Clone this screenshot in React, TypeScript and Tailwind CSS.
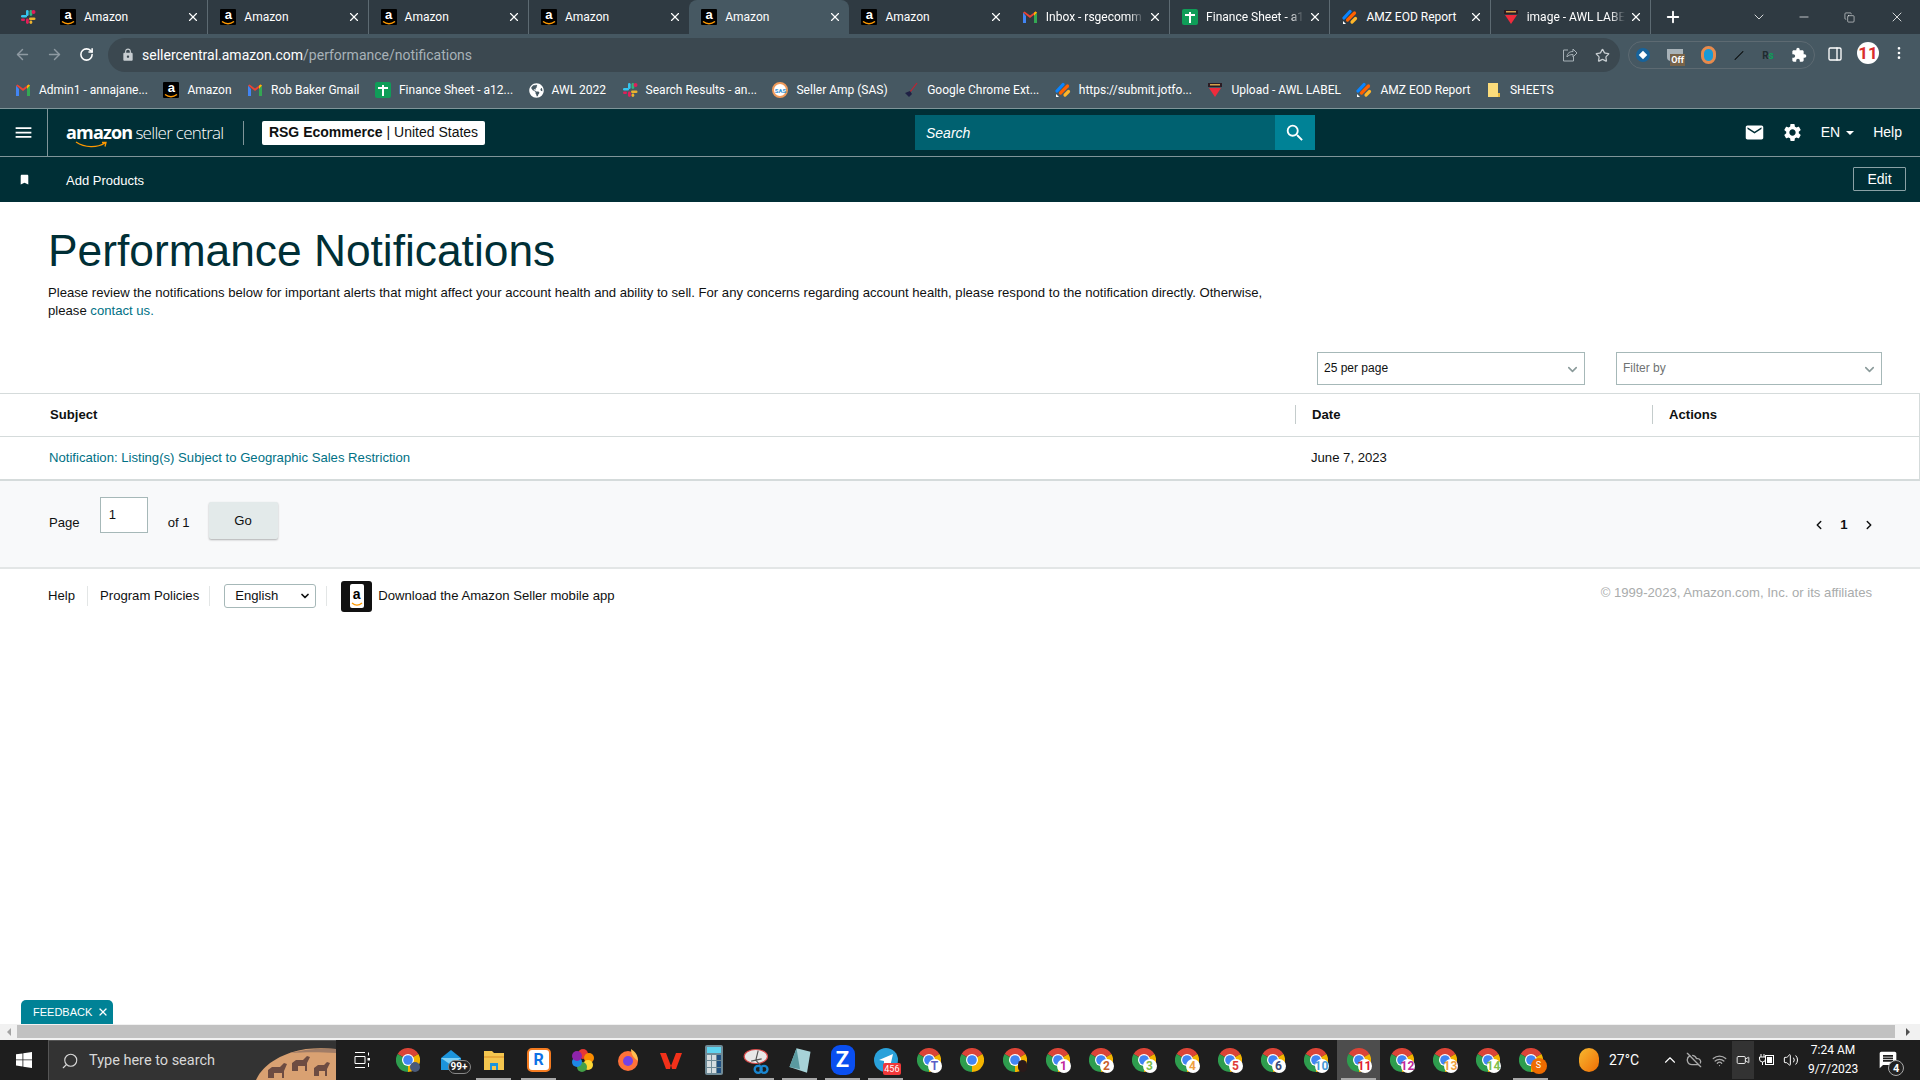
import React from "react";
import {
  ArrowLeft,
  ArrowRight,
  ChevronDown,
  ChevronLeft,
  ChevronRight,
  ChevronUp,
  Copy,
  EllipsisVertical,
  Minus,
  PanelRight,
  Plus,
  RotateCw,
  Search,
  Star,
  Video,
  Volume2,
  Wifi,
  X,
  CloudOff,
} from "lucide-react";
import { FaGlobeAmericas } from "react-icons/fa";
import {
  MdBookmark,
  MdExtension,
  MdLock,
  MdMail,
  MdMenu,
  MdMessage,
  MdSearch,
  MdSettings,
} from "react-icons/md";

const AmazonIcon = () => (
  <span className="relative flex h-4 w-4 shrink-0 justify-center rounded-[1px] bg-black font-['Liberation_Sans',sans-serif] text-[13px] leading-[12px] font-bold text-white">
    a
    <svg viewBox="0 0 16 4" className="absolute bottom-0 left-0 h-1 w-4">
      <path d="M2 0.5C6 3.5 10 3.5 14 0.5" fill="none" stroke="#f90" strokeWidth="1.4" />
    </svg>
  </span>
);

const GmailIcon = () => (
  <svg viewBox="0 0 16 16" className="h-4 w-4 shrink-0">
    <path d="M1 3.5V14h3V7z" fill="#4285f4" />
    <path d="M12 7v7h3V3.5z" fill="#34a853" />
    <path d="M1 3.5L8 9l7-5.5-1.5-1L8 6.5 2.500 2.500z" fill="#ea4335" />
    <path d="M12 7l3-3.500L13.500 2.500 12 3.700z" fill="#fbbc04" />
  </svg>
);

const SheetsIcon = () => (
  <span className="relative h-4 w-4 shrink-0 rounded-[2px] bg-[#0f9d58]">
    <span className="absolute top-[3px] left-[7px] h-[11px] w-[2px] bg-white" />
    <span className="absolute top-[5px] left-[3px] h-[2px] w-[10px] bg-white" />
  </span>
);

const SlackIcon = () => (
  <svg viewBox="0 0 16 16" className="h-4 w-4 shrink-0">
    <rect x="1" y="6" width="6" height="2.600" rx="1.300" fill="#36c5f0" />
    <rect x="6" y="1" width="2.600" height="6" rx="1.300" fill="#36c5f0" />
    <rect x="9.500" y="1" width="2.800" height="6" rx="1.400" fill="#2eb67d" />
    <circle cx="13.500" cy="3" r="2" fill="#e01e5a" />
    <rect x="9" y="8.500" width="6.500" height="2.600" rx="1.300" fill="#ecb22e" />
    <rect x="6" y="9.500" width="2.800" height="5.500" rx="1.400" fill="#e01e5a" />
    <rect x="1" y="9.500" width="4" height="2.600" rx="1.300" fill="#e01e5a" />
    <rect x="9.500" y="11.500" width="2.800" height="3.500" rx="1.400" fill="#ecb22e" />
  </svg>
);

const JotformIcon = () => (
  <svg viewBox="0 0 16 16" className="h-4 w-4 shrink-0">
    <path d="M2 9L8 2.500" stroke="#0a84ff" strokeWidth="3.200" strokeLinecap="round" />
    <path d="M5.500 11L12.500 4" stroke="#ff6100" strokeWidth="3.200" strokeLinecap="round" />
    <path d="M10 13L13.500 9.500" stroke="#ffb629" strokeWidth="3.200" strokeLinecap="round" />
    <path d="M1 12v3h3z" fill="#fff" />
  </svg>
);

const AwlIcon = () => (
  <svg viewBox="0 0 16 16" className="h-4 w-4 shrink-0">
    <rect x="1" y="1" width="14" height="4" fill="#2b1c24" />
    <rect x="3" y="2" width="10" height="1.500" fill="#d6a04a" />
    <path d="M2 6h12l-6 9z" fill="#ef2b3c" />
  </svg>
);

const SasIcon = () => (
  <span className="flex h-4 w-4 shrink-0 items-center justify-center rounded-full border-2 border-[#ef9a5a] bg-white text-[6px] font-bold text-[#2d8fd5]">
    SAS
  </span>
);

const BroomIcon = () => (
  <svg viewBox="0 0 16 16" className="h-4 w-4 shrink-0">
    <path d="M14 1L7 10" stroke="#c8202f" strokeWidth="1.200" />
    <path d="M2 11l5-2 2 3-3 3z" fill="#1f2145" />
  </svg>
);

const FolderIcon = () => (
  <svg viewBox="0 0 16 16" className="h-4 w-4 shrink-0">
    <path d="M2 1h10v14H2z" fill="#fbdc7b" />
    <path d="M12 11h2v4h-2z" fill="#e8b83f" />
  </svg>
);

const ChromeIcon = ({ badge, badgeColor, dot }: { badge?: string; badgeColor?: string; dot?: boolean }) => (
  <span className="relative block h-6 w-6">
    <svg viewBox="0 0 24 24" className="h-6 w-6">
      <path d="M12 12L1.600 6A12 12 0 0 1 22.400 6Z" fill="#db4437" />
      <path d="M12 12L22.400 6A12 12 0 0 1 12 24Z" fill="#f4b400" />
      <path d="M12 12L12 24A12 12 0 0 1 1.600 6Z" fill="#2e9d4e" />
      <circle cx="12" cy="12" r="6" fill="#fff" />
      <circle cx="12" cy="12" r="4.800" fill="#4285f4" />
    </svg>
    {badge && (
      <span
        className="absolute -right-[1px] -bottom-[1px] flex h-[14px] w-[14px] items-center justify-center rounded-full bg-white text-[12px] leading-none font-bold"
        style={{ color: badgeColor }}
      >
        {badge}
      </span>
    )}
    {dot && <span className="absolute right-0 bottom-0 h-[12px] w-[9px] rounded-full bg-[#2a1a1a]" />}
  </span>
);

const tabs = [
  { title: "Amazon", icon: <AmazonIcon /> },
  { title: "Amazon", icon: <AmazonIcon /> },
  { title: "Amazon", icon: <AmazonIcon /> },
  { title: "Amazon", icon: <AmazonIcon /> },
  { title: "Amazon", icon: <AmazonIcon />, active: true },
  { title: "Amazon", icon: <AmazonIcon /> },
  { title: "Inbox - rsgecomm", icon: <GmailIcon />, fade: true },
  { title: "Finance Sheet - a1", icon: <SheetsIcon />, fade: true },
  { title: "AMZ EOD Report", icon: <JotformIcon /> },
  { title: "image - AWL LABE", icon: <AwlIcon />, fade: true },
];

const bookmarks = [
  { title: "Admin1 - annajane...", icon: <GmailIcon /> },
  { title: "Amazon", icon: <AmazonIcon /> },
  { title: "Rob Baker Gmail", icon: <GmailIcon /> },
  { title: "Finance Sheet - a12...", icon: <SheetsIcon /> },
  { title: "AWL 2022", icon: <FaGlobeAmericas size={15} className="shrink-0 text-white" /> },
  { title: "Search Results - an...", icon: <SlackIcon /> },
  { title: "Seller Amp (SAS)", icon: <SasIcon /> },
  { title: "Google Chrome Ext...", icon: <BroomIcon /> },
  { title: "https://submit.jotfo...", icon: <JotformIcon /> },
  { title: "Upload - AWL LABEL", icon: <AwlIcon /> },
  { title: "AMZ EOD Report", icon: <JotformIcon /> },
  { title: "SHEETS", icon: <FolderIcon /> },
];

const BrowserChrome = () => (
  <div className="shrink-0 font-['Roboto',sans-serif] text-white">
    <div className="flex h-[34px] bg-[#2f3a42]">
      <div className="flex w-[48px] items-center justify-center pl-[8px]">
        <SlackIcon />
      </div>
      {tabs.map((tab, i) => (
        <div
          key={i}
          className={`flex h-[34px] w-[160.3px] items-center pr-[7px] pl-[12px] text-[12px] ${
            tab.active
              ? "rounded-t-lg bg-[#465862]"
              : tabs[i + 1]?.active || tabs[i - 1]?.active
                ? ""
                : "border-r border-[#5d6a72]"
          }`}
        >
          {tab.icon}
          <span className={`ml-2 flex-1 whitespace-nowrap ${tab.fade ? "[mask-image:linear-gradient(to_right,black_85%,transparent)]" : ""}`}>
            {tab.title}
          </span>
          <X size={14} className="ml-1 shrink-0" />
        </div>
      ))}
      <div className="flex w-[45px] items-center justify-center">
        <Plus size={18} strokeWidth={2.500} />
      </div>
      <div className="ml-auto flex items-center text-white">
        <ChevronDown size={16} strokeWidth={1.200} className="mr-[30px]" />
        <Minus size={14} strokeWidth={1.200} className="mr-[33px]" />
        <Copy size={11} strokeWidth={1.200} className="mr-[34px]" />
        <X size={16} strokeWidth={1.200} className="mr-[15px]" />
      </div>
    </div>
    <div className="flex h-[38px] items-start bg-[#465862] pt-[4px]">
      <div className="flex w-[108px] items-center justify-around px-[6px] pt-[8px]">
        <ArrowLeft size={17} className="text-[#8e9aa2]" />
        <ArrowRight size={17} className="text-[#8e9aa2]" />
        <RotateCw size={15} strokeWidth={2.500} className="text-white" />
      </div>
      <div className="flex h-[34px] w-[1512px] items-center rounded-full bg-[#3b4850] pr-[10px] pl-[13px] text-[14px]">
        <MdLock size={14} className="text-[#c7cdd1]" />
        <span className="ml-[7px]">sellercentral.amazon.com</span>
        <span className="text-[#a8b2b8]">/performance/notifications</span>
        <svg viewBox="0 0 16 16" className="ml-auto h-4 w-4 fill-none stroke-[#a8b2b8]">
          <path d="M6 3H1.500v11h10v-4" />
          <path d="M5 10c0-4 3-5.500 6-5.500V2l4 4-4 4V7.500c-3 0-5 1-6 2.500z" />
        </svg>
        <Star size={15} className="ml-[17px] text-[#c7cdd1]" />
      </div>
      <div className="mt-[3px] ml-[8px] flex h-[28px] w-[187px] items-center justify-between rounded-full border border-[#5d6a72] px-[7px]">
        <span className="flex h-[14px] w-[14px] items-center justify-center rounded-full bg-[#17639b]">
          <span className="h-[6px] w-[6px] rotate-45 bg-white" />
        </span>
        <span className="relative h-3 w-4 rounded-b bg-[#a8b2b8]">
          <span className="absolute top-[5px] left-[3px] bg-[#77634a] px-[1px] text-[9px] leading-[12px] font-bold">Off</span>
        </span>
        <span className="h-[18px] w-[15px] rounded-full border-[3px] border-[#e88a4c] bg-[#1a9ad6]" />
        <span className="h-[1px] w-3 -rotate-45 bg-black" />
        <span className="text-[10px] font-bold text-[#1f2b30]">R<span className="text-[#0f9d58]">s</span></span>
        <MdExtension size={16} className="text-white" />
      </div>
      <PanelRight size={16} className="mt-[8px] ml-[12px] text-white" />
      <span className="mt-[4px] ml-[14px] flex h-[22px] w-[22px] items-center justify-center rounded-full bg-white text-[17px] leading-none font-bold text-[#d92d2d]">11</span>
      <EllipsisVertical size={16} className="mt-[7px] ml-[12px]" />
    </div>
    <div className="flex h-[36px] items-center gap-[15.500px] bg-[#465862] pl-[15px] text-[12px]">
      {bookmarks.map((b, i) => (
        <div key={i} className="flex items-center gap-2 whitespace-nowrap">
          {b.icon}
          <span>{b.title}</span>
        </div>
      ))}
    </div>
  </div>
);

const SellerHeader = () => (
  <div className="shrink-0 bg-[#002f36] font-['Liberation_Sans',sans-serif] text-white">
    <div className="flex h-[49px] items-center border-y border-[#7f9599]">
      <div className="flex h-full w-[48px] items-center justify-center border-r border-[#7f9599]">
        <MdMenu size={21} />
      </div>
      <div className="relative ml-[18px] flex w-[159px] items-baseline font-['Open_Sans',sans-serif] whitespace-nowrap">
        <span className="text-[18px] tracking-[-0.8px] font-bold">amazon</span>
        <span className="ml-[3px] text-[17px] tracking-[-0.7px] font-light">seller central</span>
        <svg viewBox="0 0 34 8" className="absolute top-[22px] left-[9px] h-2 w-[34px]">
          <path d="M1 1C10 7 22 7 30 2M27 1.500l4 0-1 4" fill="none" stroke="#f90" strokeWidth="1.300" />
        </svg>
      </div>
      <div className="ml-[18px] h-6 w-px bg-[#7f9599]" />
      <div className="ml-[18px] flex h-[24px] w-[223px] items-center justify-center rounded-[2px] bg-white text-[14px] whitespace-nowrap text-[#0f1111]">
        <b>RSG Ecommerce</b>
        <span className="ml-1">| United States</span>
      </div>
      <div className="ml-[430px] flex h-[35px] w-[400px]">
        <div className="flex flex-1 items-center bg-[#006170] pt-px pl-[11px] text-[14px] italic">Search</div>
        <div className="flex w-[40px] items-center justify-center bg-[#008296]">
          <MdSearch size={22} />
        </div>
      </div>
      <div className="ml-auto flex items-center pr-[18px] text-[14px]">
        <MdMail size={21} />
        <MdSettings size={21} className="ml-[17px]" />
        <span className="ml-[18px]">EN</span>
        <span className="mt-[1px] ml-[6px] border-x-[4px] border-t-[4px] border-x-transparent border-t-white" />
        <span className="ml-[19px]">Help</span>
      </div>
    </div>
    <div className="flex h-[45px] items-center pr-[14px] pl-[18px] text-[13px] font-medium">
      <MdBookmark size={13} />
      <span className="mt-[3px] ml-[35px]">Add Products</span>
      <button className="mb-[1px] ml-auto h-[24px] w-[53px] rounded-[1px] border border-[#8aa1a5] text-[14px] font-normal">Edit</button>
    </div>
  </div>
);

const SelectBox = ({ label, muted, width }: { label: string; muted?: boolean; width: string }) => (
  <div className={`flex h-[33px] items-start justify-between border border-[#a6b8b8] pt-[6px] pr-[4px] pl-[6px] text-[12px] ${width} ${muted ? "text-[#6f7373]" : "text-[#0f1111]"}`}>
    <span>{label}</span>
    <ChevronDown size={15} strokeWidth={2.500} className="mt-[3px] text-[#8a9a9a]" />
  </div>
);

const NotificationsPage = () => (
  <div className="relative min-h-0 flex-1 bg-white font-['Liberation_Sans',sans-serif] text-[13.13px] text-[#0f1111]">
    <div className="pt-[23px] pl-[48px]">
      <h1 className="text-[44.3px] leading-[52px] font-normal text-[#002f36]">Performance Notifications</h1>
      <p className="mt-[7px] w-[1240px] leading-[18px]">
        Please review the notifications below for important alerts that might affect your account health and ability to sell. For any concerns regarding account health, please respond to the notification directly. Otherwise, please <span className="text-[#007185]">contact us.</span>
      </p>
    </div>
    <div className="mt-[32px] flex justify-end gap-[31px] pr-[38px]">
      <SelectBox label="25 per page" width="w-[268px]" />
      <SelectBox label="Filter by" muted width="w-[266px]" />
    </div>
    <div className="mt-[8px] border-y border-r border-[#d5dbdb] border-b-2">
      <div className="flex h-[43px] items-center border-b border-[#d5dbdb] pb-[2px] font-bold">
        <div className="h-[19px] w-[1295px] pl-[50px] leading-[19px]">Subject</div>
        <div className="h-[19px] w-[357px] border-l border-[#c4cccc] pl-[16px] leading-[19px]">Date</div>
        <div className="h-[19px] border-l border-[#c4cccc] pl-[16px] leading-[19px]">Actions</div>
      </div>
      <div className="flex h-[42px] items-center">
        <div className="w-[1295px] pl-[49px] text-[#007185]">Notification: Listing(s) Subject to Geographic Sales Restriction</div>
        <div className="pl-[16px]">June 7, 2023</div>
      </div>
    </div>
    <div className="flex h-[88px] items-start border-b-2 border-[#e3e6e6] bg-[#f8f9fa] pl-[49px]">
      <span className="mt-[32px]">Page</span>
      <div className="mt-[16px] ml-[20px] h-[36px] w-[48px] border border-[#a6b8b8] bg-white pt-[7px] pl-[8px]">1</div>
      <span className="mt-[32px] ml-[20px]">of 1</span>
      <button className="mt-[21px] ml-[19px] h-[37px] w-[69px] rounded-[2px] bg-[#e3eaea] shadow-[0_1px_2px_rgba(0,0,0,0.3)]">Go</button>
      <div className="mt-[34px] mr-[44px] ml-auto flex w-[64px] items-center justify-between">
        <ChevronLeft size={14} strokeWidth={2.500} />
        <span className="font-bold">1</span>
        <ChevronRight size={14} strokeWidth={2.500} />
      </div>
    </div>
    <div className="flex h-[54px] items-center pr-[48px] pl-[48px]">
      <span>Help</span>
      <span className="mx-[12px] h-[20px] w-px bg-[#e3e6e6]" />
      <span>Program Policies</span>
      <span className="ml-[10px] h-[20px] w-px bg-[#e3e6e6]" />
      <div className="ml-[14px] flex h-[24px] w-[92px] items-center justify-between rounded-[3px] border border-[#a6b8b8] pr-[4px] pl-[10px]">
        English
        <ChevronDown size={12} strokeWidth={3.500} />
      </div>
      <span className="ml-[10px] h-[20px] w-px bg-[#e3e6e6]" />
      <div className="relative ml-[14px] flex h-[31px] w-[31px] items-center justify-center rounded-[3px] bg-[#111]">
        <span className="relative flex h-[24px] w-[14px] justify-center rounded-[2px] bg-white pt-[3px] text-[14px] leading-[14px] font-bold text-black">
          a
          <svg viewBox="0 0 12 4" className="absolute bottom-[2px] left-[1px] h-1 w-3">
            <path d="M1 1C4 3.500 8 3.500 11 1" fill="none" stroke="#f90" strokeWidth="1.300" />
          </svg>
        </span>
      </div>
      <span className="ml-[6px]">Download the Amazon Seller mobile app</span>
      <span className="mb-[6px] ml-auto text-[#a9acac]">© 1999-2023, Amazon.com, Inc. or its affiliates</span>
    </div>
    <div className="absolute bottom-0 left-[21px] flex h-[24px] w-[92px] items-center rounded-t-[5px] bg-[#008296] pl-[12px] text-[11px] font-medium text-white">
      FEEDBACK
      <X size={12} strokeWidth={2.500} className="ml-[5px]" />
    </div>
  </div>
);

const Scrollbar = () => (
  <div className="flex h-[16px] shrink-0 items-start bg-[#f1f1f1] pt-px">
    <div className="flex h-[14px] w-[17px] items-center justify-center">
      <span className="border-y-[4px] border-r-[4px] border-y-transparent border-r-[#a3a3a3]" />
    </div>
    <div className="h-[13px] w-[1878px] bg-[#c1c1c1]" />
    <div className="flex h-[14px] flex-1 items-center justify-center">
      <span className="border-y-[4px] border-l-[4px] border-y-transparent border-l-[#505050]" />
    </div>
  </div>
);

const chromeBadges: { badge?: string; color?: string; active?: boolean; dot?: boolean }[] = [
  { badge: "T", color: "#5b5fc7" },
  {},
  { dot: true },
  { badge: "1", color: "#c0269a" },
  { badge: "2", color: "#c8602a" },
  { badge: "3", color: "#7fbf4a" },
  { badge: "4", color: "#f0a040" },
  { badge: "5", color: "#e03a3a" },
  { badge: "6", color: "#3a4a7a" },
  { badge: "10", color: "#4a9ad6" },
  { badge: "11", color: "#e01e2e", active: true },
  { badge: "12", color: "#c0269a" },
  { badge: "13", color: "#f0a040" },
  { badge: "14", color: "#7fbf4a" },
];

const TaskItem = ({
  children,
  running,
  active,
  className = "",
}: {
  children: React.ReactNode;
  running?: boolean;
  active?: boolean;
  className?: string;
}) => (
  <div className={`relative flex h-[40px] w-[43px] shrink-0 items-center justify-center ${active ? "bg-[#4d4d4d]" : ""} ${className}`}>
    {children}
    {running && <span className="absolute right-[4px] bottom-0 left-[4px] h-[2px] bg-[#a8a8a8]" />}
  </div>
);

const Taskbar = () => (
  <div className="flex h-[40px] shrink-0 items-center bg-[#1e1e1e] font-['Roboto',sans-serif] text-white">
    <div className="flex w-[48px] items-center justify-center">
      <svg viewBox="0 0 16 16" className="h-4 w-4 fill-white">
        <path d="M0 2.300L6.500 1.400V7.500H0zM7.300 1.300L16 0V7.500H7.300zM0 8.300H6.500V14.500L0 13.600zM7.300 8.300H16V16L7.300 14.700z" />
      </svg>
    </div>
    <div className="relative flex h-[40px] w-[288px] items-center overflow-hidden border-t border-l border-[#555] bg-[#333] pl-[12px] text-[14.500px] text-[#d8d8d8]">
      <Search size={18} strokeWidth={1.500} className="-scale-x-100" />
      <span className="ml-[10px]">Type here to search</span>
      <svg viewBox="0 0 80 36" className="absolute right-0 bottom-0 h-[36px] w-[80px]">
        <path d="M0 36C8 18 30 8 50 5c10-1 20-1 30 0v31z" fill="#d9a172" />
        <path d="M34 9c14-4 30-5 46-4v4C64 8 50 8 34 9z" fill="#a07c66" />
        <path d="M12 34v-8l4-3 8 0 4-4 3 1-3 7v7h-2v-5l-8 0v5zM36 27v-8l4-3 7 0 4-4 3 1-3 6v8h-2v-5l-7 0v5zM58 32v-8l4-3 6 0 3-3 3 1-3 6v7h-2v-5l-6 0v5z" fill="#6d4c42" />
      </svg>
    </div>
    <div className="flex w-[50px] items-center justify-center pl-[2px]">
      <svg viewBox="0 0 16 16" className="h-4 w-4 fill-none stroke-white">
        <path d="M1 .5h10M1 15.500h10M1 4.500h10v7H1z" />
        <rect x="13.500" y="6" width="2.500" height="2.500" fill="#fff" stroke="none" />
        <path d="M14.500 .5v3M14.500 11v4" />
      </svg>
    </div>
    <TaskItem>
      <span className="relative"><ChromeIcon /><span className="absolute right-0 bottom-0 h-[10px] w-[10px] rounded-full bg-[#4a5a7a]" /></span>
    </TaskItem>
    <TaskItem>
      <span className="relative block h-6 w-6">
        <svg viewBox="0 0 24 24" className="h-6 w-6"><path d="M2 10L12 2l10 8v12H2z" fill="#1b94dc" /><path d="M2 10l10 7 10-7" fill="#7fd0f5" /></svg>
        <span className="absolute -right-[8px] -bottom-[2px] rounded-full border border-[#888] bg-[#222] px-[2px] text-[10px] leading-[12px] font-bold">99+</span>
      </span>
    </TaskItem>
    <TaskItem running>
      <svg viewBox="0 0 24 24" className="h-6 w-6"><path d="M2 3h8l2 2h10v17H2z" fill="#f4c64f" /><path d="M2 8h20v2H2z" fill="#e7a93a" /><path d="M8 15h8v7h-2v-4h-4v4H8z" fill="#1b94dc" /></svg>
    </TaskItem>
    <TaskItem running className="ml-[2px]">
      <span className="flex h-6 w-6 items-center justify-center rounded-[5px] border-2 border-[#f47b20] bg-white text-[16px] leading-none font-bold text-[#0f72e5]">R</span>
    </TaskItem>
    <TaskItem className="ml-[1px]">
      <svg viewBox="0 0 24 24" className="h-6 w-6">
        <circle cx="12" cy="6" r="5" fill="#e53935" /><circle cx="18" cy="10" r="5" fill="#fb8c00" /><circle cx="17" cy="17" r="5" fill="#fdd835" />
        <circle cx="11" cy="19" r="5" fill="#43a047" /><circle cx="6" cy="14" r="5" fill="#1e88e5" /><circle cx="6" cy="8" r="5" fill="#8e24aa" />
      </svg>
    </TaskItem>
    <TaskItem className="ml-[2px]">
      <svg viewBox="0 0 24 24" className="h-6 w-6">
        <circle cx="12" cy="13" r="10" fill="#ff7139" /><path d="M15 1c5 3 7 7 7 12-4-3-7-6-7-12z" fill="#ffbd4f" /><circle cx="12" cy="13" r="5" fill="#7542e5" />
      </svg>
    </TaskItem>
    <TaskItem>
      <svg viewBox="0 0 24 24" className="h-6 w-6"><path d="M1 5h6l5 13 5-13h6l-6 16h-4l-1-4-1 4H7z" fill="#f2311a" /></svg>
    </TaskItem>
    <TaskItem>
      <span className="flex h-[30px] w-[18px] flex-col rounded-[2px] bg-[#6f8a96] p-[2px]">
        <span className="h-[6px] bg-[#5fd4f0]" />
        <span className="mt-[2px] grid flex-1 grid-cols-3 gap-[1px]">
          {Array.from({ length: 9 }).map((_, i) => (
            <span key={i} className={i % 3 === 2 ? "bg-[#1f4f80]" : "bg-[#d6dde0]"} />
          ))}
        </span>
      </span>
    </TaskItem>
    <TaskItem running>
      <svg viewBox="0 0 24 24" className="h-7 w-7"><ellipse cx="11" cy="9" rx="10" ry="6" fill="#e8e8e8" stroke="#d94a4a" /><path d="M13 4l-2 8 5 6M7 13l9-2" stroke="#555" fill="none" /><circle cx="18" cy="20" r="3" fill="none" stroke="#1a86d0" strokeWidth="2" /><circle cx="13" cy="20" r="3" fill="none" stroke="#1a86d0" strokeWidth="2" /></svg>
    </TaskItem>
    <TaskItem running>
      <svg viewBox="0 0 24 24" className="h-7 w-7"><path d="M9 2l12 3-3 18L3 18z" fill="#a7d3d8" /><path d="M9 2l3 18-9-2z" fill="#5a9aa0" /></svg>
    </TaskItem>
    <TaskItem running>
      <span className="flex h-[30px] w-[24px] items-center justify-center rounded-[9px] bg-[#0a4ff0] text-[22px] leading-none font-bold">Z</span>
    </TaskItem>
    <TaskItem running>
      <span className="relative block h-6 w-6 rounded-full bg-[#2aa1da]">
        <svg viewBox="0 0 24 24" className="h-6 w-6"><path d="M5 12l14-6-3 13-4-4-2 2v-4z" fill="#fff" /></svg>
        <span className="absolute -right-[3px] -bottom-[3px] rounded-[2px] bg-[#f0383a] px-px text-[9px] leading-[12px]">456</span>
      </span>
    </TaskItem>
    {chromeBadges.map((c, i) => (
      <TaskItem key={i} active={c.active} running={c.active}>
        <ChromeIcon badge={c.badge} badgeColor={c.color} dot={c.dot} />
      </TaskItem>
    ))}
    <TaskItem running>
      <span className="relative">
        <ChromeIcon />
        <span className="absolute -right-[4px] -bottom-[2px] flex h-4 w-4 items-center justify-center rounded-full bg-[#ef6c00] text-[9px]">S</span>
      </span>
    </TaskItem>
    <span className="ml-[27px] h-[24px] w-[20px] rounded-full bg-gradient-to-br from-[#f5b82e] to-[#ef6c00]" />
    <span className="ml-[10px] text-[14px]">27°C</span>
    <ChevronUp size={18} strokeWidth={1.500} className="ml-[22px]" />
    <CloudOff size={16} className="ml-[7px] text-[#aaa]" />
    <Wifi size={15} className="ml-[10px] text-[#aaa]" />
    <div className="ml-[5px] flex h-[38px] w-[22px] items-center justify-center bg-[#333]">
      <Video size={14} strokeWidth={1.500} />
    </div>
    <svg viewBox="0 0 17 14" className="ml-[4px] h-[14px] w-[17px] fill-none stroke-white">
      <path d="M3 1v3M6 1v3M1.500 4h6v2a3 3 0 0 1-6 0zM4.500 9v3" />
      <rect x="7.500" y="2.500" width="8" height="9" />
      <rect x="9" y="4" width="5" height="6" fill="#fff" stroke="none" />
    </svg>
    <Volume2 size={16} strokeWidth={1.500} className="ml-[8px]" />
    <div className="ml-[6px] flex w-[56px] flex-col items-center text-[12px] leading-[19px]">
      <span>7:24 AM</span>
      <span>9/7/2023</span>
    </div>
    <div className="relative ml-[17px]">
      <MdMessage size={20} />
      <span className="absolute -right-[6px] -bottom-[6px] flex h-4 w-4 items-center justify-center rounded-full border border-[#aaa] bg-[#222] text-[11px] leading-none font-bold">4</span>
    </div>
  </div>
);

export default function App() {
  return (
    <div className="flex h-[1080px] w-[1920px] flex-col overflow-hidden bg-white">
      <BrowserChrome />
      <SellerHeader />
      <NotificationsPage />
      <Scrollbar />
      <Taskbar />
    </div>
  );
}
